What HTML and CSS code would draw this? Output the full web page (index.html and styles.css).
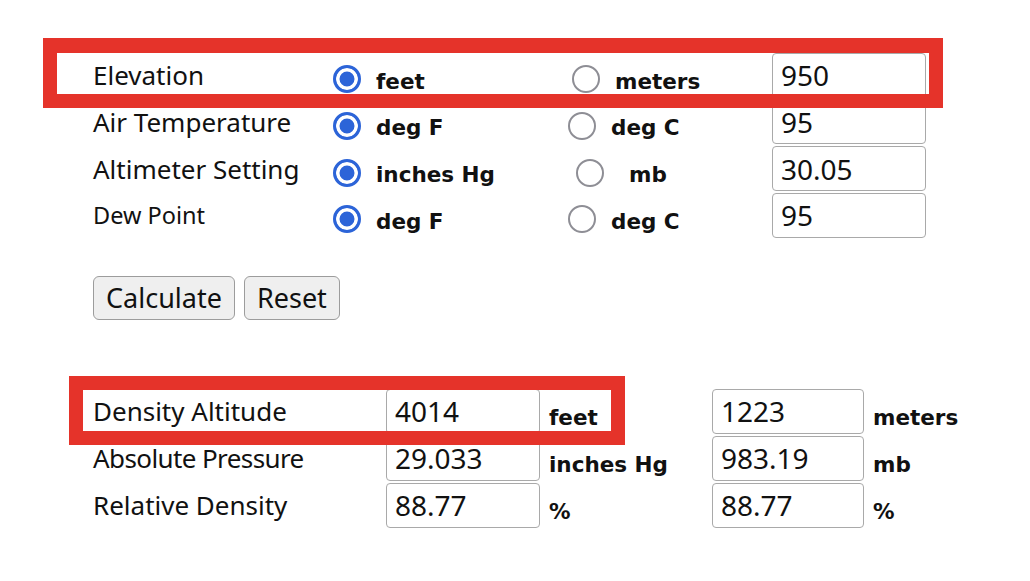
FILE: index.html
```html
<!DOCTYPE html>
<html lang="en">
<head>
<meta charset="utf-8">
<title>Density Altitude Calculator</title>
<link rel="stylesheet" href="styles.css">
</head>
<body>
<main class="page">
  <form class="calc-grid">
    <div class="label">Elevation</div>
    <label class="opt"><input type="radio" name="elev" checked><span>feet</span></label>
    <label class="opt opt--shift-s"><input type="radio" name="elev"><span>meters</span></label>
    <input class="field" type="text" value="950">

    <div class="label">Air Temperature</div>
    <label class="opt"><input type="radio" name="temp" checked><span>deg F</span></label>
    <label class="opt"><input type="radio" name="temp"><span>deg C</span></label>
    <input class="field" type="text" value="95">

    <div class="label">Altimeter Setting</div>
    <label class="opt"><input type="radio" name="alt" checked><span>inches Hg</span></label>
    <label class="opt opt--shift-m"><input type="radio" name="alt"><span>mb</span></label>
    <input class="field" type="text" value="30.05">

    <div class="label label--small">Dew Point</div>
    <label class="opt"><input type="radio" name="dew" checked><span>deg F</span></label>
    <label class="opt"><input type="radio" name="dew"><span>deg C</span></label>
    <input class="field" type="text" value="95">
  </form>

  <div class="actions">
    <button class="btn" type="button">Calculate</button>
    <button class="btn" type="button">Reset</button>
  </div>

  <div class="results">
    <div class="label">Density Altitude</div>
    <input class="field field--result" type="text" value="4014">
    <div class="unit">feet</div>
    <input class="field field--result" type="text" value="1223">
    <div class="unit">meters</div>

    <div class="label label--tight">Absolute Pressure</div>
    <input class="field field--result" type="text" value="29.033">
    <div class="unit">inches Hg</div>
    <input class="field field--result" type="text" value="983.19">
    <div class="unit">mb</div>

    <div class="label">Relative Density</div>
    <input class="field field--result" type="text" value="88.77">
    <div class="unit">%</div>
    <input class="field field--result" type="text" value="88.77">
    <div class="unit">%</div>
  </div>

  <div class="mark mark--top"></div>
  <div class="mark mark--bottom"></div>
</main>
</body>
</html>
```

FILE: styles.css
```css
* {
  box-sizing: border-box;
}

html, body {
  margin: 0;
  background: #ffffff;
}

body {
  font-family: "Noto Sans", "DejaVu Sans", sans-serif;
  color: #111111;
}

.page {
  position: relative;
  width: 1030px;
  height: 581px;
  padding: 52px 0 0 93px;
  overflow: hidden;
}

.calc-grid {
  display: grid;
  grid-template-columns: 240px 235px 204px 154px;
  grid-auto-rows: 46.67px;
  align-items: center;
  margin: 0;
}

.label {
  font-size: 26px;
  color: #111111;
  white-space: nowrap;
}

.label--small {
  font-size: 23.5px;
}

.label--tight {
  letter-spacing: -0.6px;
}

.opt {
  display: flex;
  align-items: center;
  gap: 15px;
  padding-top: 12px;
  white-space: nowrap;
}

.opt--shift-s {
  padding-left: 4px;
}

.opt--shift-m {
  padding-left: 8px;
  gap: 25px;
}

.opt span,
.unit {
  font-family: "DejaVu Sans", sans-serif;
  font-weight: bold;
  font-size: 21.5px;
  color: #111111;
}

.opt input {
  -webkit-appearance: none;
  appearance: none;
  width: 28px;
  height: 28px;
  margin: 0 0 4px 0;
  border-radius: 50%;
  border: 2.5px solid #8e8e95;
  background: #ffffff;
  flex: none;
}

.opt input:checked {
  border: 3px solid #2c64d8;
  background: #2c64d8;
  box-shadow: inset 0 0 0 3.5px #ffffff;
}

.field {
  width: 154px;
  height: 45px;
  margin: 0;
  border: 1.5px solid #a9a9a9;
  border-radius: 4px;
  padding: 0 0 0 8px;
  font-family: "Noto Sans", sans-serif;
  font-size: 28px;
  color: #111111;
  background: #ffffff;
}

.actions {
  display: flex;
  gap: 9px;
  margin-top: 37px;
}

.btn {
  height: 44px;
  padding: 0 12px;
  font-family: "Noto Sans", sans-serif;
  font-size: 27px;
  color: #111111;
  background: #efefef;
  border: 1.5px solid #9c9c9c;
  border-radius: 6px;
}

.results {
  display: grid;
  grid-template-columns: 293px 154px 172px 152px auto;
  grid-auto-rows: 47px;
  align-items: center;
  margin-top: 68px;
}

.field--result {
  width: 100%;
}

.unit {
  padding: 12px 0 0 9px;
  white-space: nowrap;
}

.mark {
  position: absolute;
  border: 14px solid #e5332a;
}

.mark--top {
  left: 43px;
  top: 38px;
  width: 900px;
  height: 70px;
  border-top-width: 15px;
}

.mark--bottom {
  left: 69px;
  top: 376px;
  width: 556px;
  height: 69px;
}
```
